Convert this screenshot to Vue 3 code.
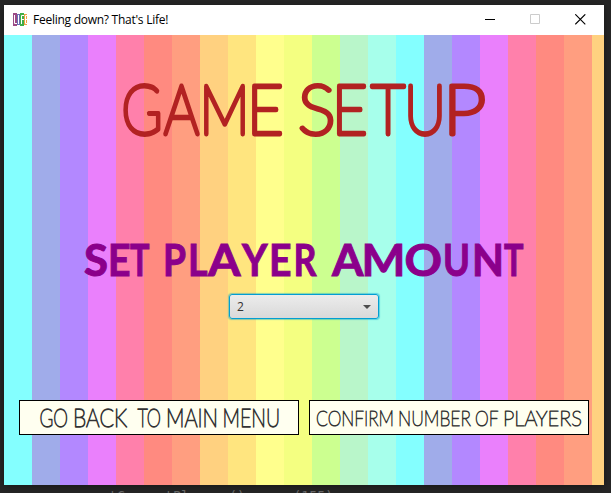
<script setup>
// Each glyph is [character, x, advance]; words are [text, x, width].
const title = [
  ['G', 121.5, 41], ['A', 164, 35], ['M', 199.5, 50], ['E', 247, 36.5],
  ['S', 298, 37.5], ['E', 332, 35.5], ['T', 371, 34], ['U', 404, 42], ['P', 443, 43]
]
const prompt = [
  ['S', 84, 24], ['E', 108, 22.5], ['T', 130, 19.5],
  ['P', 163, 23], ['L', 188, 19.5], ['A', 208, 32.5], ['Y', 242, 25.5], ['E', 269, 22.5], ['R', 293.5, 23],
  ['A', 332, 31.5], ['M', 361.5, 44], ['O', 404.5, 37.5], ['U', 443, 27], ['N', 472, 32], ['T', 504, 19.5]
]
const back = [['GO', 19.5, 28.5], ['BACK', 53, 54], ['TO', 117.5, 23.5], ['MAIN', 146, 52], ['MENU', 202.5, 57.5]]
const confirm = [['CONFIRM', 6, 78], ['NUMBER', 88, 73], ['OF', 165, 23.5], ['PLAYERS', 193, 79]]
const code = 'getCurrentPlayers()      (155)'
</script>

<template>
  <div class="desktop">
    <main class="window">
      <header class="titlebar">
        <svg class="logo" width="14" height="13" viewBox="0 0 14 13">
          <path fill="#9b4a86" d="M0 0h4v13H0z" />
          <path fill="#6b6fb5" d="M4 1h3v11H4z" />
          <path fill="#3fae49" d="M7 0h4v13H7z" />
          <path fill="#efa040" d="M11 1h3v11h-3z" />
          <path fill="none" stroke="#fff" d="M1.500 2v8.500H4M5.500 2v9M8.500 11V2.500H11M8.500 6.500H11M14 2.500h-1.500v8H14M12.500 6.500H14" />
        </svg>
        <h1 class="caption">Feeling down? That's Life!</h1>
        <div class="controls">
          <svg width="11" height="11" viewBox="0 0 11 11"><path stroke="#000" d="M0 5.500h10" /></svg>
          <svg width="11" height="11" viewBox="0 0 11 11"><path fill="none" stroke="#ccc" d="M.5.5h9v9h-9z" /></svg>
          <svg width="11" height="11" viewBox="0 0 11 11"><path stroke="#000" stroke-width="1.100" d="M.3.3l10 10M10.300.3l-10 10" /></svg>
        </div>
      </header>
      <section class="board">
        <svg class="heading" width="600" height="120" viewBox="4 35 600 120">
          <text class="title" y="133.500"><tspan v-for="([c, x, w], i) in title" :key="i" :x="x" :textLength="w" lengthAdjust="spacingAndGlyphs">{{ c }}</tspan></text>
        </svg>
        <svg class="subheading" width="600" height="60" viewBox="4 230 600 60">
          <text class="prompt" y="276"><tspan v-for="([c, x, w], i) in prompt" :key="i" :x="x" :textLength="w" lengthAdjust="spacingAndGlyphs">{{ c }}</tspan></text>
        </svg>
        <div class="combo"><span>2</span><i class="arrow"></i></div>
        <div class="actions">
          <button type="button">
            <svg width="278" height="33"><text class="back" y="26"><tspan v-for="[t, x, w] in back" :key="t" :x="x" :textLength="w" lengthAdjust="spacingAndGlyphs">{{ t }}</tspan></text></svg>
          </button>
          <button type="button">
            <svg width="278" height="33"><text class="confirm" y="25"><tspan v-for="[t, x, w] in confirm" :key="t" :x="x" :textLength="w" lengthAdjust="spacingAndGlyphs">{{ t }}</tspan></text></svg>
          </button>
        </div>
      </section>
    </main>
    <div class="code">{{ code }}</div>
  </div>
</template>

<style>
body { margin: 0; overflow: hidden; }
</style>

<style scoped>
.desktop { width: 611px; height: 493px; box-sizing: border-box; padding: 5px 0 0 4px; overflow: hidden; background: #262626; font-family: "Open Sans", sans-serif; }
.window { width: 600px; height: 480px; box-shadow: 0 2px 8px rgba(0, 0, 0, .4); }
.titlebar { height: 30px; box-sizing: border-box; padding: 0 18px 2px 9px; display: flex; align-items: center; background: #fff; }
.logo { display: block; flex: none; }
.caption { margin: 2px 0 0 6px; font: 400 12px/28px "Open Sans", sans-serif; letter-spacing: -.26px; color: #000; white-space: nowrap; }
.controls { margin-left: auto; display: flex; gap: 34px; }
.controls svg { display: block; }
.board {
  height: 450px; display: flex; flex-direction: column; align-items: center;
  background: repeating-linear-gradient(90deg, #84ffff 0 28px, #a0acea 28px 56px, #b388ff 56px 84px, #ea80fc 84px 112px, #ff80ab 112px 140px, #ff8a80 140px 168px, #ff9e80 168px 196px, #ffd180 196px 224px, #ffe57f 224px 252px, #ffff8d 252px 280px, #f4ff81 280px 308px, #ccff90 308px 336px, #b9f6ca 336px 364px, #a7ffeb 364px 392px);
}
.heading, .subheading { display: block; flex: none; }
.subheading { margin-top: 75px; }
.title { font: 100 68.500px "Lato", sans-serif; fill: #b22222; stroke: #b22222; stroke-width: 4.800; stroke-linejoin: round; }
.prompt { font: 700 44px "Lato", sans-serif; fill: #8b008b; stroke: #8b008b; stroke-width: 1; }
.combo { width: 150px; height: 25px; margin-top: 4px; box-sizing: border-box; border: 1px solid #039ed3; border-radius: 3px; box-shadow: 0 0 1px 1px rgba(3, 158, 211, .45); background: linear-gradient(#ececec, #d9d9d9); display: flex; align-items: center; justify-content: space-between; padding: 0 7px; font-size: 12px; color: #333; }
.arrow { border: 4px solid transparent; border-top-color: #4d4d4d; border-bottom: 0; }
.actions { display: flex; gap: 10px; margin-top: 81px; }
.actions button { width: 280px; height: 35px; padding: 0; border: 1px solid #000; background: ivory; }
.actions svg { display: block; overflow: visible; }
.actions text { fill: #333; stroke: #333; stroke-linejoin: round; font-family: "Lato", sans-serif; font-weight: 100; }
.back { font-size: 26px; stroke-width: 1.400; }
.confirm { font-size: 22px; stroke-width: 1.100; }
.code { margin: 4px 0 0 89px; font: 13.300px/16px "DejaVu Sans Mono", monospace; color: #666; white-space: pre; }
</style>
